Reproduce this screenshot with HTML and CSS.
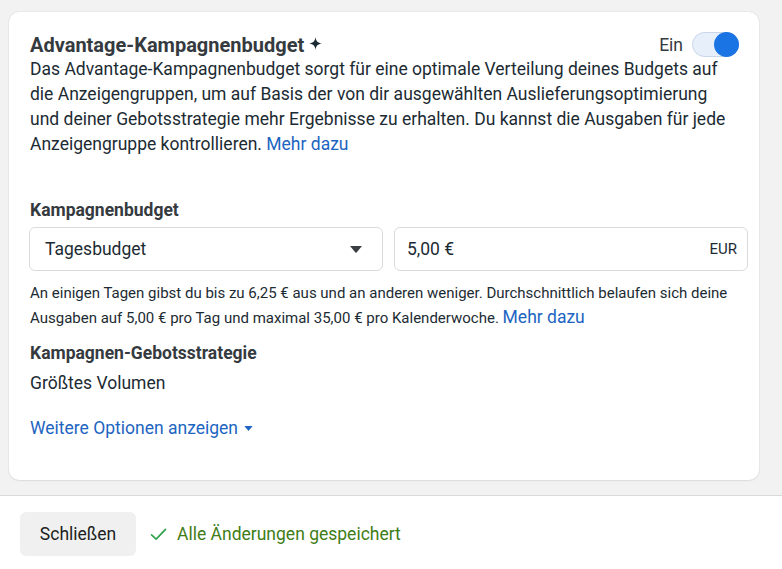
FILE: index.html
```html
<!DOCTYPE html>
<html lang="de">
<head>
<meta charset="utf-8">
<link rel="stylesheet" href="styles.css">
</head>
<body>
<div class="main">
  <section class="card">
    <div class="title-row">
      <h2 class="title">Advantage-Kampagnenbudget
        <svg class="sparkle" viewBox="0 0 12 12" width="13" height="13"><path d="M6 0 C6.5 4 8 5.5 12 6 C8 6.5 6.5 8 6 12 C5.5 8 4 6.5 0 6 C4 5.5 5.5 4 6 0 Z" fill="#1c2b33"/></svg>
      </h2>
      <div class="toggle-wrap">
        <span class="toggle-label">Ein</span>
        <span class="toggle"><span class="knob"></span></span>
      </div>
    </div>
    <p class="desc">Das Advantage-Kampagnenbudget sorgt für eine optimale Verteilung deines Budgets auf die Anzeigengruppen, um auf Basis der von dir ausgewählten Auslieferungsoptimierung und deiner Gebotsstrategie mehr Ergebnisse zu erhalten. Du kannst die Ausgaben für jede Anzeigengruppe kontrollieren. <a class="link">Mehr dazu</a></p>

    <h3 class="label label-budget">Kampagnenbudget</h3>
    <div class="fields">
      <div class="field select">
        <span>Tagesbudget</span>
        <svg class="caret" viewBox="0 0 12 7" width="12" height="7"><path d="M0 0 H12 L6.6 6.4 Q6 7 5.4 6.4 Z" fill="#3b3f44"/></svg>
      </div>
      <div class="field amount">
        <span>5,00 €</span>
        <span class="currency">EUR</span>
      </div>
    </div>
    <p class="help">An einigen Tagen gibst du bis zu 6,25 € aus und an anderen weniger. Durchschnittlich belaufen sich deine Ausgaben auf 5,00 € pro Tag und maximal 35,00 € pro Kalenderwoche. <a class="link link-lg">Mehr dazu</a></p>

    <h3 class="label label-bid">Kampagnen-Gebotsstrategie</h3>
    <p class="value">Größtes Volumen</p>

    <a class="more link">Weitere Optionen anzeigen
      <svg class="more-caret" viewBox="0 0 10 6" width="9" height="5"><path d="M0 0 H10 L5.5 5.5 Q5 6 4.5 5.5 Z" fill="#1d65c1"/></svg>
    </a>
  </section>
</div>
<footer class="footer">
  <button class="btn">Schließen</button>
  <span class="saved">
    <svg class="check" viewBox="0 0 18 14" width="17" height="13"><path d="M1.5 7.5 L6.5 12 L16.5 1.5" fill="none" stroke="#31a24c" stroke-width="1.8" stroke-linecap="round" stroke-linejoin="round"/></svg>
    Alle Änderungen gespeichert
  </span>
</footer>
</body>
</html>
```

FILE: styles.css
```css
* { box-sizing: border-box; }
html, body { margin: 0; padding: 0; }
body {
  font-family: Roboto, "Noto Sans", "Liberation Sans", sans-serif;
  color: #1c2b33;
  background: #fff;
  width: 782px;
  height: 569px;
  overflow: hidden;
}
.main {
  background: #f2f2f2;
  height: 496px;
  padding: 12px 23px 0 9px;
  border-bottom: 1px solid #dadada;
}
.card {
  background: #fff;
  border-radius: 10px;
  box-shadow: 0 0 2px rgba(0,0,0,0.12), 0 1px 2px rgba(0,0,0,0.06);
  height: 468px;
  padding: 20px 20px 0 21px;
}
.title-row {
  display: flex;
  align-items: center;
  justify-content: space-between;
  height: 25px;
}
.title {
  margin: 0;
  font-size: 20px;
  font-weight: 700;
  color: #353a3f;
  display: flex;
  align-items: center;
  gap: 5px;
}
.sparkle { margin-top: -2px; }
.toggle-wrap {
  display: flex;
  align-items: center;
  gap: 9px;
}
.toggle-label { font-size: 17.5px; color: #353a3f; }
.toggle {
  width: 47px;
  height: 25px;
  border-radius: 13px;
  background: #e7effb;
  border: 1px solid #c9d6e8;
  display: flex;
  justify-content: flex-end;
  align-items: center;
}
.knob {
  width: 25px;
  height: 25px;
  border-radius: 50%;
  background: #1b74e4;
  margin-right: -1px;
}
.desc {
  margin: 0;
  font-size: 17.5px;
  line-height: 25px;
  color: #1c2b33;
}
.link { color: #1d65c1; text-decoration: none; }
.label {
  margin: 0;
  font-size: 17.5px;
  line-height: 20px;
  font-weight: 700;
  color: #353a3f;
}
.label-budget { margin-top: 43px; }
.fields {
  display: grid;
  grid-template-columns: minmax(0, 1fr) minmax(0, 1fr);
  gap: 11px;
  margin: 7px -9px 0 -1px;
}
.field {
  height: 44px;
  border: 1px solid #d9dbdd;
  border-radius: 6px;
  display: flex;
  align-items: center;
  justify-content: space-between;
  font-size: 17.5px;
  color: #1c2b33;
}
.select { padding: 0 20px 0 15px; }
.amount { padding: 0 10px 0 12px; }
.currency { font-size: 15px; }
.caret { margin-top: 1px; }
.help {
  margin: 10px 0 0;
  font-size: 15px;
  line-height: 25px;
  color: #1c2b33;
}
.link-lg { font-size: 17.5px; line-height: 20px; }
.label-bid { margin-top: 12px; }
.value {
  margin: 10px 0 0;
  font-size: 17.5px;
  line-height: 20px;
}
.more {
  display: inline-flex;
  align-items: center;
  gap: 6px;
  margin-top: 25px;
  font-size: 17.5px;
  line-height: 20px;
}
.footer {
  display: flex;
  align-items: center;
  gap: 14px;
  padding: 16px 20px;
  background: #fff;
}
.btn {
  font-family: inherit;
  font-size: 17.5px;
  color: #1c1e21;
  background: #f0f0f0;
  border: none;
  border-radius: 6px;
  width: 116px;
  height: 44px;
  padding: 0;
}
.saved {
  display: flex;
  align-items: center;
  gap: 10px;
  font-size: 17.5px;
  color: #3f7d16;
}
```
